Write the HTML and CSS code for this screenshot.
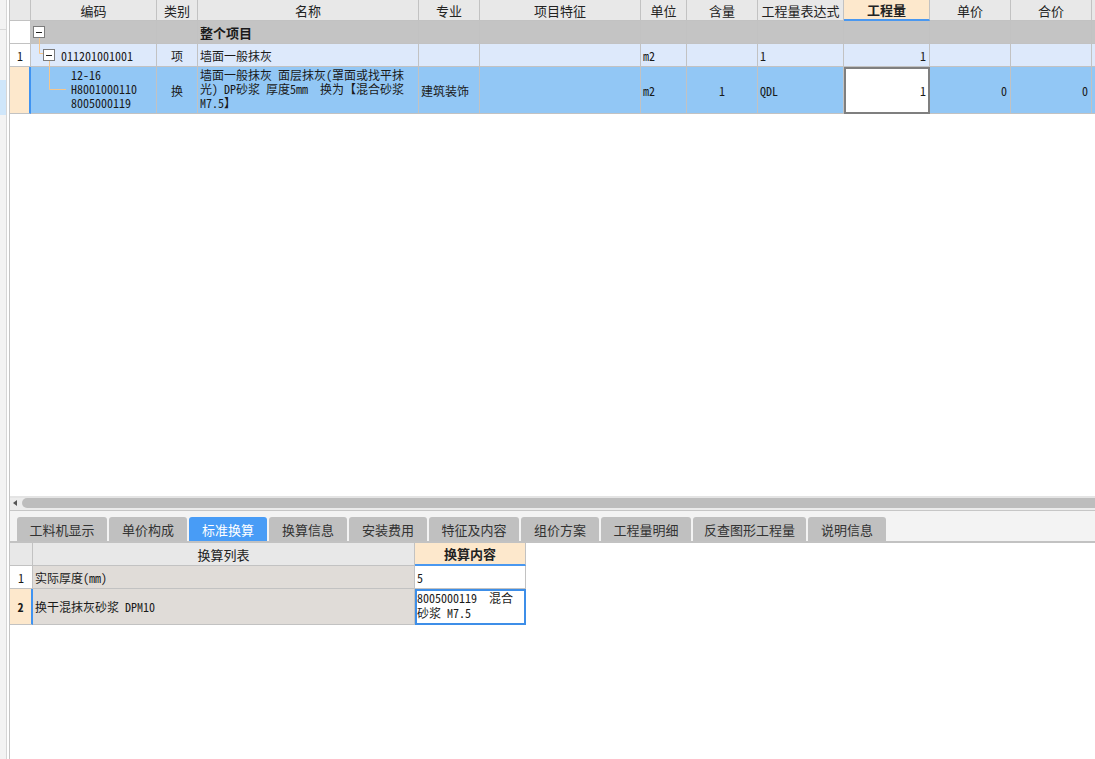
FILE: index.html
```html
<!DOCTYPE html>
<html lang="zh-CN">
<head>
<meta charset="utf-8">
<title>标准换算</title>
<link rel="stylesheet" href="styles.css">
</head>
<body>
<div class="app">
  <div class="side">
    <div class="side-top"></div>
    <div class="side-gap"></div>
    <div class="side-sel"></div>
  </div>
  <div class="main">
    <div class="upper">
      <div class="grid top-grid">
        <div class="c hdr"></div>
        <div class="c hdr">编码</div>
        <div class="c hdr">类别</div>
        <div class="c hdr">名称</div>
        <div class="c hdr">专业</div>
        <div class="c hdr">项目特征</div>
        <div class="c hdr">单位</div>
        <div class="c hdr">含量</div>
        <div class="c hdr">工程量表达式</div>
        <div class="c hdr hdr-active">工程量</div>
        <div class="c hdr">单价</div>
        <div class="c hdr">合价</div>
        <div class="c hdr last"></div>

        <div class="c num white"></div>
        <div class="c r0 code0"><span class="tbox"></span></div>
        <div class="c r0"></div>
        <div class="c r0 title">整个项目</div>
        <div class="c r0"></div>
        <div class="c r0"></div>
        <div class="c r0"></div>
        <div class="c r0"></div>
        <div class="c r0"></div>
        <div class="c r0"></div>
        <div class="c r0"></div>
        <div class="c r0"></div>
        <div class="c r0 last"></div>

        <div class="c num white">1</div>
        <div class="c r1 code1 mono"><span class="tbox"></span><span class="code-text">011201001001</span></div>
        <div class="c r1 center mono">项</div>
        <div class="c r1 mono">墙面一般抹灰</div>
        <div class="c r1"></div>
        <div class="c r1"></div>
        <div class="c r1 mono">m2</div>
        <div class="c r1"></div>
        <div class="c r1 mono">1</div>
        <div class="c r1 right mono">1</div>
        <div class="c r1"></div>
        <div class="c r1"></div>
        <div class="c r1 last"></div>

        <div class="c num sel"></div>
        <div class="c r2 code2 mono multi"><div>12-16</div><div>H8001000110</div><div>8005000119</div></div>
        <div class="c r2 center mono">换</div>
        <div class="c r2 mono multi"><div>墙面一般抹灰 面层抹灰(罩面或找平抹</div><div>光) DP砂浆 厚度5mm&nbsp; 换为【混合砂浆</div><div>M7.5】</div></div>
        <div class="c r2 mono">建筑装饰</div>
        <div class="c r2"></div>
        <div class="c r2 mono">m2</div>
        <div class="c r2 center mono">1</div>
        <div class="c r2 mono">QDL</div>
        <div class="c r2 right mono editing">1</div>
        <div class="c r2 right mono">0</div>
        <div class="c r2 right mono">0</div>
        <div class="c r2 last"></div>

        <svg class="tree-lines" width="80" height="113" viewBox="0 0 80 113">
          <path d="M29.5 38 V53.5 H33" fill="none" stroke="#f5c68c" stroke-width="1"/>
          <path d="M39.5 61 V89.5 H56" fill="none" stroke="#f5c68c" stroke-width="1"/>
        </svg>
      </div>
    </div>

    <div class="hscroll">
      <span class="arrow"></span>
      <div class="thumb"></div>
    </div>

    <div class="tabs">
      <div class="tab w5">工料机显示</div>
      <div class="tab">单价构成</div>
      <div class="tab active">标准换算</div>
      <div class="tab">换算信息</div>
      <div class="tab">安装费用</div>
      <div class="tab w5">特征及内容</div>
      <div class="tab">组价方案</div>
      <div class="tab w5">工程量明细</div>
      <div class="tab w7">反查图形工程量</div>
      <div class="tab">说明信息</div>
    </div>

    <div class="grid sub-grid">
      <div class="c hdr"></div>
      <div class="c hdr">换算列表</div>
      <div class="c hdr hdr-active">换算内容</div>

      <div class="c num white">1</div>
      <div class="c beige mono">实际厚度(mm)</div>
      <div class="c white mono">5</div>

      <div class="c num sel bold">2</div>
      <div class="c beige mono">换干混抹灰砂浆 DPM10</div>
      <div class="c white mono multi edit-blue"><div>8005000119&nbsp; 混合</div><div>砂浆 M7.5</div></div>
    </div>
  </div>
</div>
</body>
</html>
```

FILE: styles.css
```css
html, body {
  margin: 0;
  padding: 0;
  background: #ffffff;
}

body {
  font-family: "Noto Sans CJK SC", "Noto Sans", sans-serif;
  font-size: 13px;
  color: #222;
}

.app {
  display: flex;
  width: 1095px;
  height: 759px;
  overflow: hidden;
}

.side {
  width: 7px;
  flex: none;
  box-sizing: border-box;
  background: #f3f3f3;
  border-right: 1px solid #d6d6d6;
  display: flex;
  flex-direction: column;
}

.side-top {
  height: 29px;
  border-bottom: 1px solid #d8d8d8;
}

.side-gap {
  height: 50px;
}

.side-sel {
  height: 35px;
  background: #cfe6fa;
}

.main {
  flex: 1;
  margin-left: 2px;
  border-left: 1px solid #c4c4c4;
  display: flex;
  flex-direction: column;
  min-width: 0;
}

.upper {
  height: 496px;
  flex: none;
}

.grid {
  display: grid;
  position: relative;
}

.top-grid {
  grid-template-columns: 21px 126px 41px 221px 61px 161px 46px 71px 86px 86px 81px 81px 1fr;
  grid-template-rows: 21px 23px 23px 47px;
}

.c {
  box-sizing: border-box;
  border-right: 1px solid #c2c2c2;
  border-bottom: 1px solid #c2c2c2;
  display: flex;
  align-items: center;
  padding: 0 2px;
  overflow: hidden;
  white-space: nowrap;
  font-size: 12px;
  color: #1a1a1a;
}

.c.last {
  border-right: none;
}

.mono {
  font-family: "Noto Sans Mono CJK SC", "Noto Sans CJK SC", "Liberation Mono", monospace;
  font-size: 12px;
}

.hdr {
  background: #e8e8e8;
  justify-content: center;
  font-size: 13px;
  color: #222;
}

.hdr-active {
  background: #fde8cc;
  font-weight: bold;
  border-bottom: 2px solid #4a98f0;
}

.num {
  justify-content: center;
  font-family: "Noto Sans Mono CJK SC", "Noto Sans CJK SC", monospace;
  font-size: 12px;
}

.white {
  background: #ffffff;
}

.sel {
  background: #fde8cc;
  border-right: 2px solid #3f93f2;
}

.bold {
  font-weight: bold;
}

.r0 {
  background: #c4c4c4;
}

.r1 {
  background: #dde9fb;
}

.r2 {
  background: #92c7f5;
}

.title {
  font-weight: bold;
  font-size: 13px;
}

.center {
  justify-content: center;
}

.right {
  justify-content: flex-end;
  padding-right: 3px;
}

.multi {
  white-space: nowrap;
  line-height: 14px;
  display: flex;
  flex-direction: column;
  align-items: flex-start;
  justify-content: flex-start;
  padding-top: 1px;
}

.multi > div {
  height: 14px;
}

.tbox {
  position: relative;
  z-index: 1;
  width: 12px;
  height: 12px;
  box-sizing: border-box;
  border: 1px solid #7c7c7c;
  background: #ffffff;
  flex: none;
  display: inline-flex;
  align-items: center;
  justify-content: center;
}

.tbox::before {
  content: "";
  width: 6px;
  height: 1px;
  background: #222;
}

.code0 {
  padding-left: 2px;
}

.code1 {
  padding-left: 12px;
}

.code-text {
  margin-left: 6px;
}

.code2 {
  padding-left: 40px;
}

.editing {
  background: #ffffff;
  outline: 2px solid #7f7f7f;
  outline-offset: -2px;
}

.tree-lines {
  position: absolute;
  left: 0;
  top: 0;
  pointer-events: none;
}

.hscroll {
  height: 15px;
  flex: none;
  box-sizing: border-box;
  background: #ececec;
  border-top: 2px solid #e4e4e4;
  border-bottom: 1px solid #c6c6c6;
  display: flex;
  align-items: flex-start;
  padding-left: 3px;
}

.arrow {
  width: 0;
  height: 0;
  margin-top: 2px;
  border-top: 3px solid transparent;
  border-bottom: 3px solid transparent;
  border-right: 4px solid #555;
  flex: none;
}

.thumb {
  flex: 1;
  height: 10px;
  margin-left: 5px;
  background: #bdbdbd;
  border-radius: 5px 0 0 5px;
}

.tabs {
  height: 32px;
  flex: none;
  box-sizing: border-box;
  background: #f3f3f3;
  border-bottom: 2px solid #c2c2c2;
  padding: 6px 0 0 7px;
  display: flex;
  gap: 2px;
}

.tab {
  width: 78px;
  height: 24px;
  flex: none;
  background: #c0c0c0;
  border-radius: 3px 3px 0 0;
  display: flex;
  align-items: center;
  justify-content: center;
  font-size: 13px;
  color: #333;
  white-space: nowrap;
}

.tab.w5 {
  width: 90px;
}

.tab.w7 {
  width: 113px;
}

.tab.active {
  background: #489cf6;
  color: #ffffff;
}

.sub-grid {
  grid-template-columns: 23px 382px 111px;
  grid-template-rows: 23px 23px 36px;
  width: 516px;
}

.beige {
  background: #e0dcd8;
}

.edit-blue {
  outline: 2px solid #3d8ee8;
  outline-offset: -2px;
  padding-top: 1px;
  line-height: 15px;
}

.edit-blue > div {
  height: 15px;
}
```
